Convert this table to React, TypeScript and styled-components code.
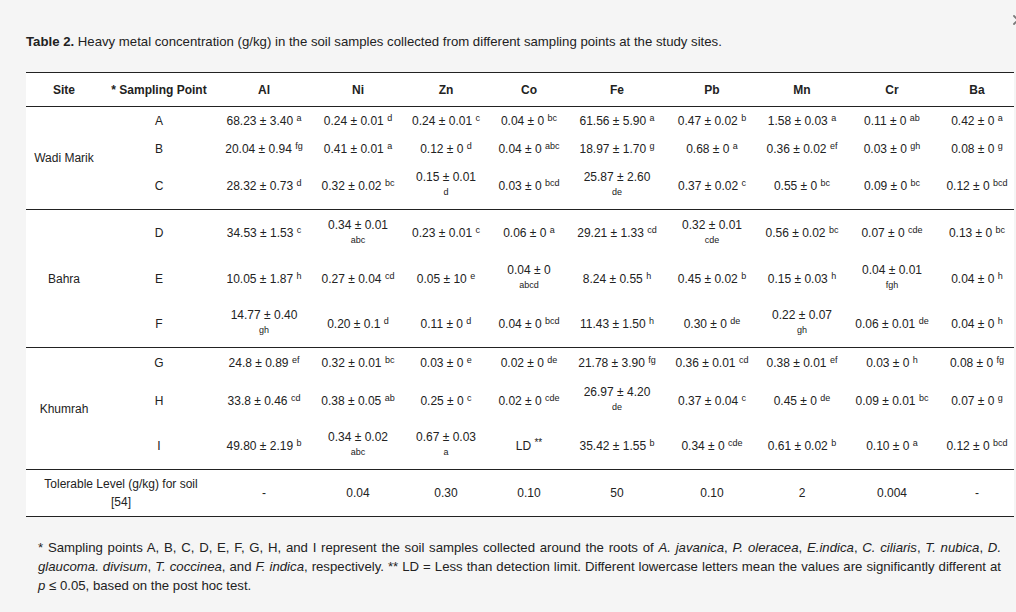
import React from 'react';
import styled, { createGlobalStyle } from 'styled-components';

const GlobalStyle = createGlobalStyle`
  html, body { margin: 0; padding: 0; background: #f5f5f5; }
  body {
    width: 1016px;
    height: 612px;
    overflow: hidden;
    font-family: "Liberation Sans", Arial, sans-serif;
    color: #212121;
  }
`;

const Page = styled.div`
  position: relative;
  padding: 32px 0 0 26px;
`;

const CloseButton = styled.button`
  position: absolute;
  top: 14px;
  left: 1012px;
  width: 12px;
  height: 12px;
  padding: 0;
  border: 0;
  background: transparent;
  display: flex;
`;

const Caption = styled.p`
  margin: 0 0 20px;
  font-size: 13.2px;
  line-height: 20px;
  color: #222;
`;

const Table = styled.table`
  width: 988px;
  table-layout: fixed;
  border-collapse: collapse;
  background: #fff;
  font-size: 12px;
  border-top: 1px solid #222;
  border-bottom: 1px solid #222;
`;

const HeadCell = styled.th`
  height: 33px;
  padding: 0 4px;
  font-weight: bold;
  text-align: center;
  vertical-align: middle;
  border-bottom: 1px solid #222;
  color: #222;
`;

const Group = styled.tbody`
  border-top: 1px solid #222;
`;

const Row = styled.tr<{ $h: number }>`
  height: ${(p) => p.$h}px;
`;

const Cell = styled.td<{ $wide?: boolean }>`
  padding: ${(p) => (p.$wide ? '0 12px' : '0 4px')};
  text-align: center;
  vertical-align: middle;
  line-height: ${(p) => (p.$wide ? '18px' : '16px')};
  color: #222;
`;

const Sup = styled.sup<{ $block?: boolean; $big?: boolean }>`
  font-size: ${(p) => (p.$big ? '10px' : '9px')};
  ${(p) =>
    p.$block
      ? `display: block; line-height: 14px; margin-bottom: 3px; vertical-align: baseline;`
      : `vertical-align: 4px; line-height: 0;`}
`;

const Footnote = styled.p`
  width: 963px;
  margin: 21px 0 0 12px;
  font-size: 13.2px;
  line-height: 19px;
  text-align: justify;
  color: #222;
`;

type V = [string, string, boolean?];

type SiteGroup = {
  site: string;
  rows: { point: string; h: number; values: V[] }[];
};

const groups: SiteGroup[] = [
  {
    site: 'Wadi Marik',
    rows: [
      {
        point: 'A',
        h: 28,
        values: [
          ['68.23 ± 3.40', 'a'],
          ['0.24 ± 0.01', 'd'],
          ['0.24 ± 0.01', 'c'],
          ['0.04 ± 0', 'bc'],
          ['61.56 ± 5.90', 'a'],
          ['0.47 ± 0.02', 'b'],
          ['1.58 ± 0.03', 'a'],
          ['0.11 ± 0', 'ab'],
          ['0.42 ± 0', 'a'],
        ],
      },
      {
        point: 'B',
        h: 28,
        values: [
          ['20.04 ± 0.94', 'fg'],
          ['0.41 ± 0.01', 'a'],
          ['0.12 ± 0', 'd'],
          ['0.04 ± 0', 'abc'],
          ['18.97 ± 1.70', 'g'],
          ['0.68 ± 0', 'a'],
          ['0.36 ± 0.02', 'ef'],
          ['0.03 ± 0', 'gh'],
          ['0.08 ± 0', 'g'],
        ],
      },
      {
        point: 'C',
        h: 47,
        values: [
          ['28.32 ± 0.73', 'd'],
          ['0.32 ± 0.02', 'bc'],
          ['0.15 ± 0.01', 'd', true],
          ['0.03 ± 0', 'bcd'],
          ['25.87 ± 2.60', 'de', true],
          ['0.37 ± 0.02', 'c'],
          ['0.55 ± 0', 'bc'],
          ['0.09 ± 0', 'bc'],
          ['0.12 ± 0', 'bcd'],
        ],
      },
    ],
  },
  {
    site: 'Bahra',
    rows: [
      {
        point: 'D',
        h: 47,
        values: [
          ['34.53 ± 1.53', 'c'],
          ['0.34 ± 0.01', 'abc', true],
          ['0.23 ± 0.01', 'c'],
          ['0.06 ± 0', 'a'],
          ['29.21 ± 1.33', 'cd'],
          ['0.32 ± 0.01', 'cde', true],
          ['0.56 ± 0.02', 'bc'],
          ['0.07 ± 0', 'cde'],
          ['0.13 ± 0', 'bc'],
        ],
      },
      {
        point: 'E',
        h: 44,
        values: [
          ['10.05 ± 1.87', 'h'],
          ['0.27 ± 0.04', 'cd'],
          ['0.05 ± 10', 'e'],
          ['0.04 ± 0', 'abcd', true],
          ['8.24 ± 0.55', 'h'],
          ['0.45 ± 0.02', 'b'],
          ['0.15 ± 0.03', 'h'],
          ['0.04 ± 0.01', 'fgh', true],
          ['0.04 ± 0', 'h'],
        ],
      },
      {
        point: 'F',
        h: 47,
        values: [
          ['14.77 ± 0.40', 'gh', true],
          ['0.20 ± 0.1', 'd'],
          ['0.11 ± 0', 'd'],
          ['0.04 ± 0', 'bcd'],
          ['11.43 ± 1.50', 'h'],
          ['0.30 ± 0', 'de'],
          ['0.22 ± 0.07', 'gh', true],
          ['0.06 ± 0.01', 'de'],
          ['0.04 ± 0', 'h'],
        ],
      },
    ],
  },
  {
    site: 'Khumrah',
    rows: [
      {
        point: 'G',
        h: 31,
        values: [
          ['24.8 ± 0.89', 'ef'],
          ['0.32 ± 0.01', 'bc'],
          ['0.03 ± 0', 'e'],
          ['0.02 ± 0', 'de'],
          ['21.78 ± 3.90', 'fg'],
          ['0.36 ± 0.01', 'cd'],
          ['0.38 ± 0.01', 'ef'],
          ['0.03 ± 0', 'h'],
          ['0.08 ± 0', 'fg'],
        ],
      },
      {
        point: 'H',
        h: 44,
        values: [
          ['33.8 ± 0.46', 'cd'],
          ['0.38 ± 0.05', 'ab'],
          ['0.25 ± 0', 'c'],
          ['0.02 ± 0', 'cde'],
          ['26.97 ± 4.20', 'de', true],
          ['0.37 ± 0.04', 'c'],
          ['0.45 ± 0', 'de'],
          ['0.09 ± 0.01', 'bc'],
          ['0.07 ± 0', 'g'],
        ],
      },
      {
        point: 'I',
        h: 47,
        values: [
          ['49.80 ± 2.19', 'b'],
          ['0.34 ± 0.02', 'abc', true],
          ['0.67 ± 0.03', 'a', true],
          ['LD', '**'],
          ['35.42 ± 1.55', 'b'],
          ['0.34 ± 0', 'cde'],
          ['0.61 ± 0.02', 'b'],
          ['0.10 ± 0', 'a'],
          ['0.12 ± 0', 'bcd'],
        ],
      },
    ],
  },
];

const columns = [
  { label: 'Site', w: 76 },
  { label: '* Sampling Point', w: 114 },
  { label: 'Al', w: 96 },
  { label: 'Ni', w: 92 },
  { label: 'Zn', w: 84 },
  { label: 'Co', w: 82 },
  { label: 'Fe', w: 94 },
  { label: 'Pb', w: 96 },
  { label: 'Mn', w: 84 },
  { label: 'Cr', w: 96 },
  { label: 'Ba', w: 74 },
];

const tolerable = ['-', '0.04', '0.30', '0.10', '50', '0.10', '2', '0.004', '-'];

function Value({ v }: { v: V }) {
  const [text, sup, wrap] = v;
  return (
    <>
      {text}{' '}
      <Sup $block={wrap} $big={sup === '**'}>
        {sup}
      </Sup>
    </>
  );
}

function CloseIcon() {
  return (
    <svg width="12" height="12" viewBox="0 0 12 12" aria-hidden="true">
      <path d="M2 2 L10 10 M10 2 L2 10" stroke="#7a7a7a" strokeWidth="1.8" strokeLinecap="round" />
    </svg>
  );
}

export default function App() {
  return (
    <>
      <GlobalStyle />
      <Page>
        <CloseButton aria-label="Close">
          <CloseIcon />
        </CloseButton>
        <Caption>
          <b>Table 2.</b> Heavy metal concentration (g/kg) in the soil samples collected from
          different sampling points at the study sites.
        </Caption>
        <Table>
          <colgroup>
            {columns.map((c) => (
              <col key={c.label} style={{ width: c.w }} />
            ))}
          </colgroup>
          <thead>
            <tr>
              {columns.map((c) => (
                <HeadCell key={c.label}>{c.label}</HeadCell>
              ))}
            </tr>
          </thead>
          {groups.map((g) => (
            <Group key={g.site}>
              {g.rows.map((r, i) => (
                <Row key={r.point} $h={r.h}>
                  {i === 0 && <Cell rowSpan={g.rows.length}>{g.site}</Cell>}
                  <Cell>{r.point}</Cell>
                  {r.values.map((v, j) => (
                    <Cell key={j}>
                      <Value v={v} />
                    </Cell>
                  ))}
                </Row>
              ))}
            </Group>
          ))}
          <Group>
            <Row $h={47}>
              <Cell colSpan={2} $wide>
                Tolerable Level (g/kg) for soil [54]
              </Cell>
              {tolerable.map((t, i) => (
                <Cell key={i}>{t}</Cell>
              ))}
            </Row>
          </Group>
        </Table>
        <Footnote>
          * Sampling points A, B, C, D, E, F, G, H, and I represent the soil samples collected around
          the roots of <i>A. javanica</i>, <i>P. oleracea</i>, <i>E.indica</i>, <i>C. ciliaris</i>,{' '}
          <i>T. nubica</i>, <i>D. glaucoma. divisum</i>, <i>T. coccinea</i>, and <i>F. indica</i>,
          respectively. ** LD = Less than detection limit. Different lowercase letters mean the values
          are significantly different at <i>p</i> ≤ 0.05, based on the post hoc test.
        </Footnote>
      </Page>
    </>
  );
}
